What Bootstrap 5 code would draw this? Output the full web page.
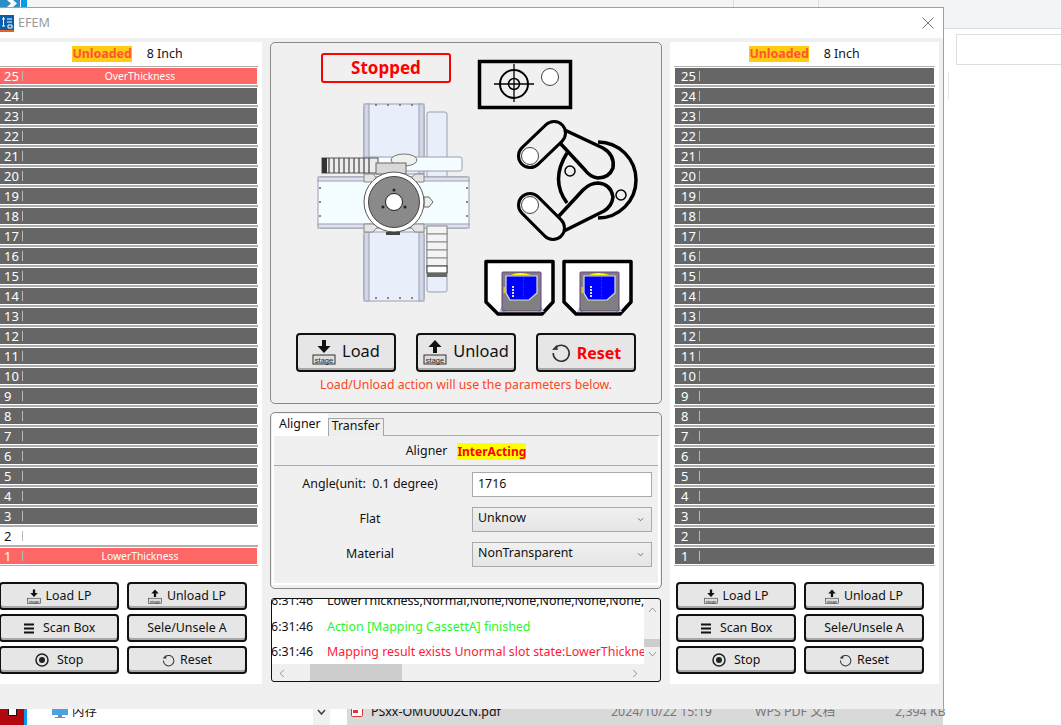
<!DOCTYPE html>
<html lang="en">
<head>
<meta charset="UTF-8">
<title>EFEM</title>
<link href="https://cdn.jsdelivr.net/npm/bootstrap@5.3.3/dist/css/bootstrap.min.css" rel="stylesheet">
<style>
  html, body { height: 725px; overflow: hidden; }
  body { position: relative; background: #fff; font-family: "Noto Sans", "Noto Sans CJK SC", sans-serif; font-size: 12.4px; color: #111; }

  /* desktop behind the window */
  .desk-top { position: absolute; left: 0; top: 0; width: 1061px; height: 29px; background: #f3f4f6; border-bottom: 1px solid #ddd; }
  .desk-logo { position: absolute; left: 0; top: 0; }
  .desk-tab { position: absolute; top: 0; width: 1px; height: 8px; background: #ddd; }
  .desk-input { position: absolute; left: 956px; top: 34px; width: 120px; height: 31px; border: 1px solid #ddd; }
  .desk-rule { position: absolute; left: 948px; top: 72px; width: 1px; height: 27px; background: #e6e6e6; }
  .desk-list { position: absolute; left: 0; top: 709px; width: 1061px; height: 16px; overflow: hidden; font-size: 12.4px; line-height: 6px; }
  .desk-list > * { position: absolute; top: 0; }
  .desk-red { left: 0; width: 24px; height: 16px; background: #b3070d; }
  .desk-red i { position: absolute; left: 8px; top: 0; width: 9px; height: 7px; background: #fff; border: 1px solid #111; border-top: 0; }
  .desk-blue { left: 24px; width: 3px; height: 16px; background: #0a9be8; }
  .desk-chev { left: 313px; width: 17px; height: 16px; background: #f0f0f0; }
  .desk-sel { left: 347px; width: 596px; height: 16px; background: #d9d9d9; }
  .desk-muted { color: #777; }

  /* window */
  .efem { position: absolute; left: -11px; top: 7px; width: 955px; height: 702px; background: #f0f0f0; border: 1px solid #a0a0a0; border-bottom: 0; }
  .efem-title { height: 30px; background: #fff; padding-left: 10px; color: #999; font-size: 12.6px; }
  .efem-close { margin-left: auto; margin-right: 9px; }
  .efem-body { padding: 4px 3px 0 3px; gap: 8px; }

  .port { width: 269px; height: 642px; background: #fff; }
  .port-head { height: 24px; gap: 15px; }
  .flag-unloaded { background: #ffcc11; color: #ff5533; font-weight: 700; line-height: 16px; }
  .slots { margin: 0 4px; height: 500px; background: #b0b0b0; display: flex; flex-direction: column; }
  .slot { flex: none; height: 18px; margin: 1px 0; border: 1px solid #fff; background: #666; color: #fff; line-height: 16px; }
  .slot-no { flex: none; width: 24px; padding-left: 6px; font-size: 13px; }
  .slot-sep { width: 1px; height: 10px; background: #bbb; flex: none; }
  .slot-text { flex: 1; text-align: center; font-size: 10.3px; }
  .slot.bad { background: #ff6666; }
  .slot.empty { background: #fff; color: #111; }
  .port-btns { margin: 16px 0 0 6px; width: 248px; display: grid; grid-template-columns: 120px 120px; gap: 4px 8px; }

  .btn-efem { --bs-btn-padding-x: 0; --bs-btn-padding-y: 0; --bs-btn-font-size: 12.4px; --bs-btn-border-radius: 4px;
    height: 28px; background: #e6e6e6; border: 2px solid #111; color: #111; box-shadow: inset 0 -2px 0 #a8a8a8; gap: 5px; line-height: 1; }
  .btn-efem:hover { background: #e6e6e6; border-color: #111; color: #111; }
  .btn-main { width: 100px; height: 39px; padding-bottom: 2px; font-size: 16.4px; gap: 6px; }
  .btn-reset { color: #f00; font-weight: 700; font-size: 16px; padding-bottom: 0; }
  .btn-reset:hover { color: #f00; }

  .centre { width: 392px; }
  .group { border: 1px solid #8a8a8a; border-radius: 5px; background: #f0f0f0; }
  .stage { height: 362px; }
  .stage-left { width: 205px; }
  .status { margin: 10px 0 0 50px; width: 130px; height: 30px; border: 2px solid #f00; border-radius: 3px; color: #f00; font-weight: 700; font-size: 17px; line-height: 26px; text-align: center; }
  .machine { display: block; margin: 17px 0 0 45px; }
  .robot { display: block; margin: 4px 0 0 36px; }
  .marker { display: block; margin-top: 15px; }
  .carriers { display: block; margin: 14px 0 0 7px; }
  .stage-btns { gap: 20px; margin-top: 16px; }
  .stage-note { color: #ff4422; text-align: center; margin-top: 3px; line-height: 20px; font-size: 12.3px; }

  .tabs-group { height: 177px; margin-top: 8px; padding: 1px 2px 3px 1px; }
  .tabs-group .nav-tabs { border-bottom: 0; height: 22px; align-items: flex-end; position: relative; z-index: 1; }
  .tabs-group .nav-link { padding: 0 3px; height: 18px; line-height: 14px; border: 1px solid #a8a8a8; border-bottom: 0; border-radius: 0; color: #111; background: #eee; margin: 0; }
  .tabs-group .nav-link.active { height: 22px; padding: 0 6px; line-height: 18px; background: #fff; border-color: #fff; color: #111; }
  .tab-pane-box { height: 150px; border-top: 1px solid #a8a8a8; border-left: 2px solid #fff; border-right: 2px solid #fff; border-bottom: 2px solid #fff; margin-top: -1px; width: 388px; }
  .align-head { height: 30px; padding-top: 2px; gap: 10px; border-bottom: 1px solid #aaa; }
  .flag-acting { background: #ff0; color: #f00; font-weight: 700; font-size: 12px; line-height: 17px; }
  .param { height: 25px; margin-top: 10px; }
  .align-head + .param { margin-top: 6px; }
  .param-label { width: 192px; text-align: center; }
  .param .form-control, .param .form-select { width: 180px; height: 25px; min-height: 0; margin-left: 6px; padding: 0 5px 3px; border: 1px solid #aaa; border-radius: 0; font-size: 12.4px; color: #111; line-height: 20px; }
  .param .form-select { background-color: #ececec; background-image: url("data:image/svg+xml,%3csvg xmlns='http://www.w3.org/2000/svg' viewBox='0 0 8 6'%3e%3cpath fill='none' stroke='%23555' stroke-width='1' d='M1 1.5l3 3 3-3'/%3e%3c/svg%3e"), linear-gradient(#f0f0f0, #e5e5e5); background-size: 7px 5px, 100% 100%; background-position: right 7px center, 0 0; background-repeat: no-repeat; }

  .log { height: 84px; margin: 9px 1px 0 1px; width: 390px; border: 1px solid #111; border-radius: 3px; background: #f0f0f0; overflow: hidden; display: grid; grid-template-columns: 372px 17px; grid-template-rows: 65px 18px; }
  .log-lines { background: #fff; overflow: hidden; position: relative; }
  .log-line { position: absolute; left: -8px; white-space: nowrap; line-height: 18px; display: flex; width: 640px; }
  .log-time { width: 63px; flex: none; }
  .vbar, .hbar { position: relative; color: #888; }
  .vbar-thumb { position: absolute; left: 0; top: 40px; width: 17px; height: 8px; background: #cdcdcd; }
  .hbar-thumb { position: absolute; left: 38px; top: 0; width: 92px; height: 18px; background: #cdcdcd; }
  .sb-arrow { position: absolute; display: block; }
</style>
</head>
<body>

<div class="desk-top">
  <svg class="desk-logo" width="27" height="7" viewBox="0 0 27 7"><rect width="20" height="7" fill="#2a8fc6"/><path d="M7 0h6l4 3.500L13 7H7l4-3.500z" fill="#fff"/><rect x="21" width="6" height="7" fill="#0a9be8"/></svg>
  <span class="desk-tab" style="left:733px"></span><span class="desk-tab" style="left:818px"></span>
</div>
<div class="desk-input"></div>
<div class="desk-rule"></div>
<div class="desk-list">
  <span class="desk-red"><i></i></span><span class="desk-blue"></span>
  <svg style="left:51px" width="18" height="10" viewBox="0 0 18 10"><rect x="1" y="0" width="16" height="6" fill="#4aa3e0"/><rect x="7" y="6" width="4" height="2" fill="#7a8a99"/><rect x="4" y="8" width="10" height="1" fill="#7a8a99"/></svg>
  <span style="left:72px">内存</span>
  <span class="desk-chev"><svg class="d-block mx-auto" width="9" height="7" viewBox="0 0 9 7"><path d="M1 1l3.500 4L8 1" fill="none" stroke="#444" stroke-width="1.500"/></svg></span>
  <span class="desk-sel"></span>
  <svg style="left:351px" width="12" height="8" viewBox="0 0 12 8"><rect x="0.500" y="-2" width="11" height="9.500" rx="1" fill="#fff" stroke="#d33"/><rect x="2" y="1" width="5" height="3" fill="#d33"/></svg>
  <span style="left:371px">PSxx-OMU0002CN.pdf</span>
  <span class="desk-muted" style="left:611px">2024/10/22 15:19</span>
  <span class="desk-muted" style="left:755px">WPS PDF 文档</span>
  <span class="desk-muted" style="left:895px">2,394 KB</span>
</div>

<svg width="0" height="0" class="position-absolute">
  <symbol id="ic-load" viewBox="0 0 24 26">
    <path d="M10 1h4v6h4.500L12 14 5.500 7H10z" fill="#111"/>
    <rect x="1" y="16" width="22" height="9" fill="#ddd" stroke="#333"/>
    <text x="12" y="23.500" font-size="7.500" text-anchor="middle" fill="#222" font-family="Liberation Sans, sans-serif">stage</text>
  </symbol>
  <symbol id="ic-unload" viewBox="0 0 24 26">
    <path d="M10 14h4V8h4.500L12 1 5.500 8H10z" fill="#111"/>
    <rect x="1" y="16" width="22" height="9" fill="#ddd" stroke="#333"/>
    <text x="12" y="23.500" font-size="7.500" text-anchor="middle" fill="#222" font-family="Liberation Sans, sans-serif">stage</text>
  </symbol>
  <symbol id="ic-reset" viewBox="0 0 20 20">
    <path d="M5 4.200A8 8 0 1 1 2.200 10" fill="none" stroke="#333" stroke-width="1.600"/>
    <path d="M1 7l6-.2L5.600 2z" fill="#333"/>
  </symbol>
</svg>

<div class="efem d-flex flex-column">
  <div class="efem-title d-flex align-items-center gap-1">
    <svg width="14" height="17" viewBox="0 0 14 17"><rect width="14" height="15" fill="#0b5ea8"/><rect y="15" width="14" height="2" fill="#e8641b"/><path d="M2 4h3M3.500 2v9M2 11h3M7 4h5M7 7h5M8 10h4v3H8z" stroke="#fff" fill="none"/></svg>
    <span>EFEM</span>
    <svg class="efem-close" width="12" height="12" viewBox="0 0 12 12"><path d="M.5.5l11 11M11.500.5l-11 11" stroke="#777"/></svg>
  </div>

  <div class="efem-body d-flex">
    <div class="port" id="port-a">
      <div class="port-head d-flex justify-content-center align-items-center"><span class="flag-unloaded">Unloaded</span><span>8 Inch</span></div>
      <div class="slots"></div>
      <div class="port-btns"></div>
    </div>

    <div class="centre">
      <div class="group stage">
        <div class="d-flex">
          <div class="stage-left">
            <div class="status">Stopped</div>
            <svg class="machine" width="156" height="204" viewBox="316 100 156 204">
              <g stroke="#9a9eae" stroke-width="1">
                <rect x="427" y="112" width="20" height="180" rx="2" fill="#e9eefb"/>
                <rect x="364" y="104" width="60" height="70" rx="3" fill="#e9eefb"/>
                <rect x="364" y="232" width="60" height="69" rx="3" fill="#e9eefb"/>
                <rect x="364" y="104" width="5" height="70" fill="#d2d6e8"/><rect x="419" y="104" width="5" height="70" fill="#d2d6e8"/>
                <rect x="364" y="232" width="5" height="69" fill="#d2d6e8"/><rect x="419" y="232" width="5" height="69" fill="#d2d6e8"/>
                <rect x="318" y="177" width="151" height="51" rx="3" fill="#f4fdff"/>
                <rect x="318" y="177" width="151" height="4" fill="#dde1f0"/><rect x="318" y="224" width="151" height="4" fill="#dde1f0"/>
                <rect x="362" y="157" width="100" height="14" rx="2" fill="#f4fdff"/>
                <rect x="322" y="158" width="56" height="15" fill="#ececec" stroke="#555"/>
              </g>
              <path d="M329 158v15M334 158v15M339 158v15M344 158v15M349 158v15M354 158v15M359 158v15M364 158v15M369 158v15" stroke="#444" stroke-width="1.200"/>
              <rect x="322" y="158" width="5" height="15" fill="#333"/>
              <ellipse cx="404" cy="160" rx="13" ry="6" fill="#f0f0f0" stroke="#777"/>
              <rect x="376" y="163" width="30" height="11" fill="#d8d8d8" stroke="#666"/>
              <g fill="#f4f4f4" stroke="#888"><rect x="427" y="226" width="20" height="8"/><rect x="427" y="234" width="20" height="8"/><rect x="427" y="242" width="20" height="8"/><rect x="427" y="250" width="20" height="8"/><rect x="427" y="258" width="20" height="8"/></g>
              <rect x="427" y="266" width="20" height="7" fill="#fff" stroke="#333"/><rect x="427" y="273" width="20" height="4" fill="#666"/>
              <path d="M364 174l9 0 7 8-16 0zM424 174l-9 0-7 8 16 0zM364 232l9 0 7-8-16 0zM424 232l-9 0-7-8 16 0z" fill="#e4e4e4" stroke="#888"/>
              <path d="M424 197l5 0 4 5-4 5-5 0z" fill="#eee" stroke="#666"/>
              <circle cx="394" cy="202" r="30" fill="#fff" stroke="#555"/>
              <circle cx="394" cy="202" r="25.500" fill="#8a8a8a" stroke="#444"/>
              <circle cx="394" cy="202" r="8.500" fill="#fff" stroke="#222"/>
              <circle cx="394" cy="190" r="1.500" fill="#222"/><circle cx="383" cy="207" r="1.500" fill="#222"/><circle cx="405" cy="207" r="1.500" fill="#222"/>
              <rect x="386" y="232" width="14" height="3" fill="#444"/>
              <g fill="#666"><circle cx="376" cy="105" r="1"/><circle cx="388" cy="105" r="1"/><circle cx="400" cy="105" r="1"/><circle cx="412" cy="105" r="1"/><circle cx="376" cy="298" r="1"/><circle cx="388" cy="298" r="1"/><circle cx="400" cy="298" r="1"/><circle cx="412" cy="298" r="1"/><circle cx="320" cy="188" r="1"/><circle cx="320" cy="202" r="1"/><circle cx="320" cy="216" r="1"/><circle cx="467" cy="188" r="1"/><circle cx="467" cy="202" r="1"/><circle cx="467" cy="216" r="1"/></g>
            </svg>
          </div>
          <div>
            <svg class="marker" width="98" height="53" viewBox="476 58 98 53">
              <rect x="479.500" y="61.500" width="91" height="46" fill="#f0f0f0" stroke="#000" stroke-width="3.500"/>
              <circle cx="514" cy="84" r="14" fill="none" stroke="#000" stroke-width="2"/>
              <circle cx="514" cy="84" r="5.500" fill="none" stroke="#000" stroke-width="1.500"/>
              <path d="M494 84h40M514 64v38" stroke="#000" stroke-width="1.300"/>
              <circle cx="550" cy="77" r="8.500" fill="#fff" stroke="#444"/>
            </svg>
            <svg class="robot" width="130" height="130" viewBox="512 115 130 130" fill="none" stroke="#000" stroke-width="3.500" stroke-linejoin="round">
              <path d="M598 142A38 38 0 0 1 598 218"/>
              <path d="M567 153Q550 180 567 203"/>
              <path d="M554 125L603 148Q615 155 613 168Q609 178 598 178Q590 177 585 170L560 143" fill="#f0f0f0"/>
              <path d="M558 217L583 190Q590 183 598 183Q611 184 613 197Q612 206 604 211L556 235" fill="#f0f0f0"/>
              <path d="M530 156L554 133" stroke-width="26" stroke-linecap="round"/>
              <path d="M530 156L554 133" stroke="#f0f0f0" stroke-width="20" stroke-linecap="round"/>
              <path d="M530 205L553 228" stroke-width="26" stroke-linecap="round"/>
              <path d="M530 205L553 228" stroke="#f0f0f0" stroke-width="20" stroke-linecap="round"/>
              <circle cx="530" cy="156" r="8.500" fill="#fff" stroke="#444" stroke-width="1"/>
              <circle cx="530" cy="205" r="8.500" fill="#fff" stroke="#444" stroke-width="1"/>
              <circle cx="570" cy="171" r="5" stroke-width="1.500"/>
              <circle cx="621" cy="195" r="5" stroke-width="1.500"/>
            </svg>
            <svg class="carriers" width="152" height="58" viewBox="483 259 152 58">
              <defs>
                <g id="carrier">
                  <path d="M486 261.500H553V302L542 314H498L486 302Z" fill="#fff" stroke="#000" stroke-width="3.500" stroke-linejoin="round"/>
                  <path d="M502 306l-3 6h6zM541 306l3 6h-6z" fill="#a9cbe8"/>
                  <rect x="502" y="272" width="39" height="39" rx="1" fill="#808080" stroke="#6b3f86"/>
                  <path d="M511 275Q520 271 531 275z" fill="#ff0"/>
                  <path d="M506 276H537V293L529 300H510L506 293Z" fill="#00f" stroke="#ddd" stroke-width="1.200"/>
                  <path d="M523.500 277v22" stroke="#3344aa" stroke-dasharray="1 1"/>
                  <path d="M513 286v11" stroke="#ddd" stroke-width="2" stroke-dasharray="2 1"/>
                  <rect x="503.500" y="287" width="2" height="6" fill="#d8c840"/>
                </g>
              </defs>
              <use href="#carrier"/>
              <use href="#carrier" x="78"/>
            </svg>
          </div>
        </div>
        <div class="d-flex justify-content-center stage-btns">
          <button class="btn btn-efem btn-main d-inline-flex align-items-center justify-content-center"><svg width="24" height="26"><use href="#ic-load"/></svg>Load</button>
          <button class="btn btn-efem btn-main d-inline-flex align-items-center justify-content-center"><svg width="24" height="26"><use href="#ic-unload"/></svg>Unload</button>
          <button class="btn btn-efem btn-main btn-reset d-inline-flex align-items-center justify-content-center"><svg width="20" height="20"><use href="#ic-reset"/></svg>Reset</button>
        </div>
        <div class="stage-note">Load/Unload action will use the parameters below.</div>
      </div>

      <div class="group tabs-group">
        <ul class="nav nav-tabs">
          <li class="nav-item"><a class="nav-link active" href="#">Aligner</a></li>
          <li class="nav-item"><a class="nav-link" href="#">Transfer</a></li>
        </ul>
        <div class="tab-pane-box">
          <div class="align-head d-flex justify-content-center align-items-center"><span>Aligner</span><span class="flag-acting">InterActing</span></div>
          <div class="param d-flex align-items-center"><label class="param-label">Angle(unit:&nbsp; 0.1 degree)</label><input class="form-control" value="1716"></div>
          <div class="param d-flex align-items-center"><label class="param-label">Flat</label><select class="form-select"><option>Unknow</option></select></div>
          <div class="param d-flex align-items-center"><label class="param-label">Material</label><select class="form-select"><option>NonTransparent</option></select></div>
        </div>
      </div>

      <div class="log">
        <div class="log-lines">
          <div class="log-line" style="top:-7px"><span class="log-time">16:31:46</span><span>LowerThickness,Normal,None,None,None,None,None,None,None</span></div>
          <div class="log-line" style="top:19px"><span class="log-time">16:31:46</span><span style="color:#2af52a">Action [Mapping CassettA] finished</span></div>
          <div class="log-line" style="top:44px"><span class="log-time">16:31:46</span><span style="color:#ff1a3a">Mapping result exists Unormal slot state:LowerThickness</span></div>
        </div>
        <div class="vbar">
          <svg class="sb-arrow" style="left:4px;top:8px" width="9" height="6"><path d="M1 5l3.500-4L8 5" fill="none" stroke="#999"/></svg>
          <div class="vbar-thumb"></div>
          <svg class="sb-arrow" style="left:4px;top:52px" width="9" height="6"><path d="M1 1l3.500 4L8 1" fill="none" stroke="#999"/></svg>
        </div>
        <div class="hbar">
          <svg class="sb-arrow" style="left:7px;top:5px" width="6" height="9"><path d="M5 1L1 4.500 5 8" fill="none" stroke="#999"/></svg>
          <div class="hbar-thumb"></div>
          <svg class="sb-arrow" style="left:360px;top:5px" width="6" height="9"><path d="M1 1l4 3.500L1 8" fill="none" stroke="#999"/></svg>
        </div>
        <div></div>
      </div>
    </div>

    <div class="port" id="port-b">
      <div class="port-head d-flex justify-content-center align-items-center"><span class="flag-unloaded">Unloaded</span><span>8 Inch</span></div>
      <div class="slots"></div>
      <div class="port-btns"></div>
    </div>
  </div>
</div>

<script>
  const slotStates = {
    a: { 25: ["bad", "OverThickness"], 2: ["empty", ""], 1: ["bad", "LowerThickness"] },
    b: {}
  };

  const portButtons = `
    <button class="btn btn-efem d-inline-flex align-items-center justify-content-center"><svg width="14" height="15"><use href="#ic-load"/></svg>Load LP</button>
    <button class="btn btn-efem d-inline-flex align-items-center justify-content-center"><svg width="14" height="15"><use href="#ic-unload"/></svg>Unload LP</button>
    <button class="btn btn-efem d-inline-flex align-items-center justify-content-center"><svg width="12" height="11" viewBox="0 0 12 11"><path d="M1 1.500h10M1 5.500h10M1 9.500h10" stroke="#111" stroke-width="2"/></svg>&nbsp;Scan Box</button>
    <button class="btn btn-efem">Sele/Unsele A</button>
    <button class="btn btn-efem d-inline-flex align-items-center justify-content-center"><svg width="14" height="14" viewBox="0 0 14 14"><circle cx="7" cy="7" r="6" fill="none" stroke="#222" stroke-width="1.500"/><circle cx="7" cy="7" r="3" fill="#222"/></svg>&nbsp;Stop</button>
    <button class="btn btn-efem d-inline-flex align-items-center justify-content-center"><svg width="13" height="13"><use href="#ic-reset"/></svg>Reset</button>`;

  for (const key of ["a", "b"]) {
    const port = document.getElementById("port-" + key);
    let rows = "";
    for (let n = 25; n >= 1; n--) {
      const [cls, text] = slotStates[key][n] || ["", ""];
      rows += `<div class="slot d-flex align-items-center ${cls}"><span class="slot-no">${n}</span><span class="slot-sep"></span><span class="slot-text">${text}</span></div>`;
    }
    port.querySelector(".slots").innerHTML = rows;
    port.querySelector(".port-btns").innerHTML = portButtons;
  }
</script>
<script src="https://cdn.jsdelivr.net/npm/bootstrap@5.3.3/dist/js/bootstrap.bundle.min.js"></script>
</body>
</html>
